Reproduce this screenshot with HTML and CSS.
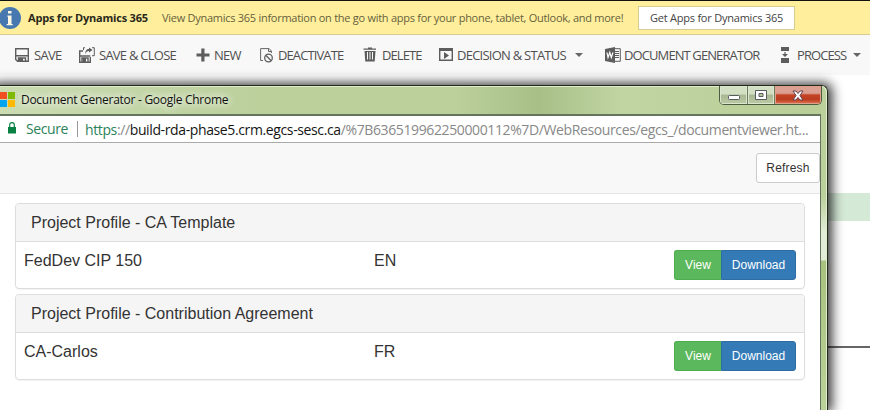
FILE: index.html
```html
<!DOCTYPE html>
<html lang="en">
<head>
<meta charset="utf-8">
<title>Document Generator</title>
<link rel="stylesheet" href="styles.css">
</head>
<body>
<header class="notice">
  <svg class="info" width="22" height="24" viewBox="0 0 22 24"><circle cx="10" cy="12" r="11" fill="#4779b0"/><path d="M8 5h3.500v2.500H8zM7.500 9.500h4V18h1.200v1.300h-6V18H8v-7h-.500z" fill="#fff8e0"/></svg>
  <b class="notice-title">Apps for Dynamics 365</b>
  <span class="notice-text">View Dynamics 365 information on the go with apps for your phone, tablet, Outlook, and more!</span>
  <button class="get-apps">Get Apps for Dynamics 365</button>
</header>
<nav class="commands">
  <div class="command save"><svg width="14" height="14" viewBox="0 0 14 14"><path d="M.7.7h12.6v12.6H2.5L.7 11.5zM.7 7.8h12.6M3.5 13V10h7v3" fill="none" stroke="#5d5d5d" stroke-width="1.4"/><path d="M4 10h4v3H4z" fill="#5d5d5d"/></svg><span>SAVE</span></div>
  <div class="command close"><svg width="16" height="16" viewBox="0 0 16 16"><path d="M4 4H.7v11.3h10.6V10M.7 9h10.6M3 15v-4h6v4" fill="none" stroke="#5d5d5d" stroke-width="1.4"/><path d="M3.5 11H7v4H3.500zM10 .5 13.500 3 10 5.500V4C8 4 7 5 6.500 7 6 4 7.500 2 10 2z" fill="#5d5d5d"/><path d="M6 .7H4.500V3M13 .7h2.300v8H13" fill="none" stroke="#5d5d5d"/></svg><span>SAVE &amp; CLOSE</span></div>
  <div class="command new"><svg width="14" height="14" viewBox="0 0 14 14"><path d="M5.300.500h3.200v5H13.500v3h-5v5H5.300v-5H.500v-3h4.800z" fill="#5d5d5d"/></svg><span>NEW</span></div>
  <div class="command deactivate"><svg width="14" height="16" viewBox="0 0 14 16"><path d="M3 13.500H.600V1.600h8.500l2.300 2.500V6M8.500 1.500v3h3" fill="none" stroke="#666"/><circle cx="8.500" cy="11" r="3.800" fill="none" stroke="#5d5d5d" stroke-width="1.300"/><path d="m6 8.500 5 5" stroke="#5d5d5d" stroke-width="1.300"/></svg><span>DEACTIVATE</span></div>
  <div class="command delete"><svg width="14" height="15" viewBox="0 0 14 15"><path d="M5 .500h4v1h4v1.300H.500V1.500H5zM1.500 4h11l-.800 10.500H2.300z" fill="#5d5d5d"/><path d="M4.500 5v7.500M7 5v7.500M9.500 5v7.500" stroke="#f8f8f8"/></svg><span>DELETE</span></div>
  <div class="command decision"><svg width="14" height="13" viewBox="0 0 14 13"><path d="M.700 1h12.600v11.300H.700z" fill="none" stroke="#5d5d5d" stroke-width="1.400"/><path d="M0 0h14v3H0zM5 4l5 3.500L5 11z" fill="#5d5d5d"/></svg><span>DECISION &amp; STATUS</span><i class="caret"></i></div>
  <div class="command generator"><svg width="16" height="16" viewBox="0 0 16 16"><path d="M9 1.700h6.300v12.600H9M10 4.500h4M10 6.500h4M10 8.500h4M10 10.500h4" fill="none" stroke="#5d5d5d"/><path d="m0 2 10-2v16L0 14z" fill="#5d5d5d"/><path d="m2 5.500 1 5 1.800-5 1.500 5 1.700-5" fill="none" stroke="#fff" stroke-width="1.200"/></svg><span>DOCUMENT GENERATOR</span></div>
  <div class="command process"><svg width="8" height="16" viewBox="0 0 8 16"><path d="M0 0h8v4H0zM0 11h8v5H0zM3.400 5h1.200v2H7L4 10 1 7h2.400z" fill="#5d5d5d"/></svg><span>PROCESS</span><i class="caret"></i></div>
</nav>
<main class="desktop">
  <div class="band"></div>
  <div class="rule"></div>
  <section class="window">
    <div class="titlebar">
      <svg class="logo" width="15" height="15" viewBox="0 0 15 15"><path d="M0 0h7v7H0z" fill="#f25022"/><path d="M8 0h7v7H8z" fill="#7fba00"/><path d="M0 8h7v7H0z" fill="#00a4ef"/><path d="M8 8h7v7H8z" fill="#ffb900"/></svg>
      <span class="window-title">Document Generator - Google Chrome</span>
      <div class="controls">
        <div class="control"><svg class="minimize" width="12" height="5"><rect x=".500" y=".500" width="11" height="4" rx="1" fill="#fff" stroke="#565b62"/></svg></div>
        <div class="control"><svg width="12" height="10"><path d="M.500.500h11v9H.500z" fill="#fff" stroke="#565b62"/><path d="M4 3.500h4v3H4z" fill="#b5c99a" stroke="#565b62"/></svg></div>
        <div class="control shut"><svg width="12" height="11" viewBox="0 0 12 11"><path d="M1 1h3l2 2.500L8 1h3L8 5.500l3 4.500H8L6 7.500 4 10H1l3-4.500z" fill="#fff" stroke="#63404a"/></svg></div>
      </div>
    </div>
    <div class="page">
      <div class="address">
        <svg class="lock" width="8" height="12" viewBox="0 0 8 12"><path d="M0 5h8v6.500H0z" fill="#0b8043"/><path d="M1.700 5V3Q1.700.700 4 .700T6.300 3v2" fill="none" stroke="#0b8043" stroke-width="1.200"/></svg>
        <span class="secure">Secure</span>
        <span class="url"><span class="scheme">https</span>://<span class="host">build-rda-phase5.crm.egcs-sesc.ca</span><span class="path">/%7B636519962250000112%7D/WebResources/egcs_/documentviewer.ht...</span></span>
      </div>
      <div class="tools"><button class="refresh">Refresh</button></div>
      <div class="documents">
        <article class="panel">
          <h2>Project Profile - CA Template</h2>
          <div class="row"><span>FedDev CIP 150</span><span>EN</span><div class="buttons"><button class="view">View</button><button class="download">Download</button></div></div>
        </article>
        <article class="panel">
          <h2>Project Profile - Contribution Agreement</h2>
          <div class="row"><span>CA-Carlos</span><span>FR</span><div class="buttons"><button class="view">View</button><button class="download">Download</button></div></div>
        </article>
      </div>
    </div>
  </section>
</main>
</body>
</html>
```
FILE: styles.css
```css
* { box-sizing: border-box; }
body { margin: 0; width: 870px; height: 410px; overflow: hidden; background: #fff; font-family: "Open Sans", "Noto Sans", sans-serif; white-space: nowrap; }
button { margin: 0; font-family: inherit; }
.notice { display: flex; align-items: center; height: 35px; background: #ffef9d; border-top: 1px solid #111; border-bottom: 1px solid #d6ce90; color: #66603b; font-size: 11px; }
.info { flex: none; }
.notice-title { width: 134px; margin-left: 6px; color: #292819; letter-spacing: -.2px; }
.notice-text { width: 476px; letter-spacing: -.27px; }
.get-apps { width: 157px; height: 24px; padding: 0; background: #fff; border: 1px solid #d6ce90; color: #444; font-size: 11px; letter-spacing: -.22px; }
.commands { display: grid; grid-template-columns: 64px 117px 64px 103px 76px 166px 176px 89px; height: 40px; padding-left: 15px; background: #f8f8f8; color: #505050; font-size: 13px; }
.command { display: flex; align-items: center; height: 39px; letter-spacing: -.9px; }
.command svg { flex: none; margin-right: 5px; }
.close svg, .new svg, .deactivate svg, .decision svg { margin-right: 4px; }
.generator svg { margin-right: 3px; }
.process svg { margin-right: 8px; }
.save, .new { letter-spacing: -.7px; }
.close, .decision { letter-spacing: -.75px; }
.decision span { width: 118px; }
.process span { width: 56px; }
.caret { border: 4px solid transparent; border-top-color: #666; border-bottom: 0; }
.desktop { position: relative; height: 335px; }
.band { position: absolute; top: 118px; right: 0; width: 50px; height: 28px; background: #d5e9d7; }
.rule { position: absolute; top: 271px; right: 0; width: 50px; height: 2px; background: #666; }
.window { position: absolute; top: 10px; left: -10px; width: 838px; height: 325px; padding: 0 6px 0 9px; border: 1px solid #222b1b; border-bottom: 0; border-radius: 6px 6px 0 0; background: linear-gradient(#bbd09b 0, #bbd09b 110px, #e1ebd5 145px, #e1ebd5 174px, #a8c17e 175px, #bbd29b 330px); box-shadow: inset -1px 1px 0 #e2edd0, 2px 0 12px 2px rgba(0, 0, 0, .8); }
.titlebar { display: flex; height: 27px; margin: 1px 0 0 -9px; padding-left: 9px; background: linear-gradient(90deg, #cbdcb3 0, #bbd09b 32%, #bbd09b 56%, #a9bf88 66%, #c0d5a2 76%, #b9cd97); }
.logo { margin-top: 5px; }
.window-title { height: 18px; margin: 4px 0 0 6px; line-height: 18px; font-size: 12px; letter-spacing: -.28px; color: #111; text-shadow: 0 0 8px #fff, 0 0 8px #fff; }
.controls { display: flex; height: 19px; margin: -1px -1px 0 auto; border: 1px solid #4e5b42; border-top: 0; border-radius: 0 0 5px 5px; overflow: hidden; }
.control { display: flex; align-items: center; justify-content: center; width: 28px; border-right: 1px solid #6e7b5e; background: linear-gradient(#d3dfc3 45%, #a7b793 50%, #bccba4); box-shadow: inset 0 0 0 1px #dce6cf; }
.control + .control { width: 27px; }
.minimize { margin-top: 5px; }
.controls .shut { width: 46px; border: 0; background: linear-gradient(#dba091 40%, #c44325 50%, #bd3d20 75%, #df7957); box-shadow: inset 0 0 0 1px #e0a18c; }
.page { height: 296px; background: #fff; border-top: 2px solid #65745c; border-right: 1px solid #65745c; }
.address { display: flex; align-items: center; height: 27px; padding-left: 8px; border-bottom: 1px solid #aaa; font-size: 14px; }
.lock { flex: none; margin-top: -2px; }
.secure { flex: none; width: 52px; margin-left: 10px; border-right: 1px solid #999; line-height: 16px; color: #2b8259; letter-spacing: -.4px; }
.url { margin-left: 7px; color: #888; letter-spacing: -.38px; }
.scheme { color: #2b8259; }
.host { color: #151515; }
.path { color: #888; }
.tools { display: flex; justify-content: flex-end; height: 51px; padding-top: 10px; border-bottom: 1px solid #e5e5e5; background: #f8f8f8; }
button.refresh { width: 64px; height: 30px; padding: 0; border: 1px solid #ccc; border-radius: 3px; background: #fff; color: #333; font: 12px "Liberation Sans", sans-serif; letter-spacing: .2px; }
.documents { display: grid; gap: 5px; padding: 9px 15px; font-family: "Liberation Sans", sans-serif; color: #333; }
.panel { height: 86px; border: 1px solid #ddd; border-radius: 4px; box-shadow: 0 1px 1px rgba(0, 0, 0, .05); overflow: hidden; }
.panel h2 { height: 38px; margin: 0; padding-left: 15px; border-bottom: 1px solid #ddd; background: #f5f5f5; font-size: 16px; font-weight: 400; line-height: 37px; }
.row { display: grid; grid-template-columns: 350px 300px auto; padding: 8px 8px 0; font-size: 16px; line-height: 21px; }
.buttons { display: flex; }
.buttons button { height: 30px; padding: 0; color: #fff; font: 12px "Liberation Sans", sans-serif; }
.view { width: 47px; border: 1px solid #4cae4c; border-right: 0; border-radius: 3px 0 0 3px; background: #5cb85c; }
.download { width: 75px; border: 1px solid #2e6da4; border-radius: 0 3px 3px 0; background: #337ab7; }
```
